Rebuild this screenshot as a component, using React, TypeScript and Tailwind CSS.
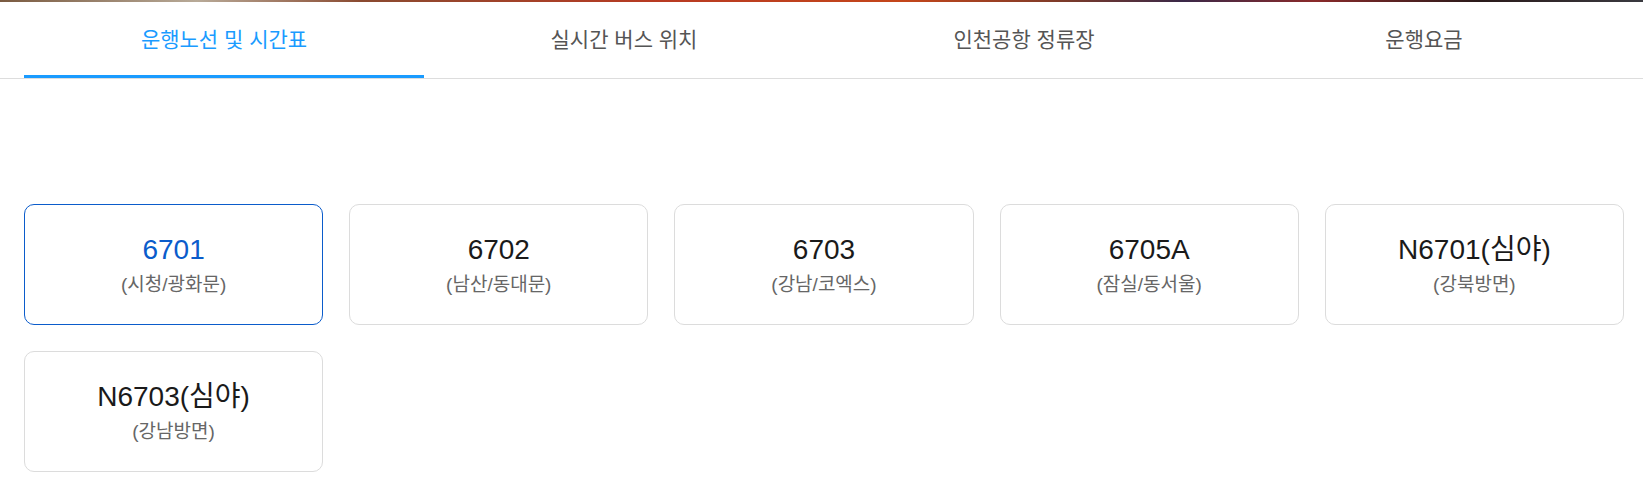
import React, { useState } from 'react';

const tabs = ['운행노선 및 시간표', '실시간 버스 위치', '인천공항 정류장', '운행요금'];

const routes = [
  { no: '6701', area: '(시청/광화문)' },
  { no: '6702', area: '(남산/동대문)' },
  { no: '6703', area: '(강남/코엑스)' },
  { no: '6705A', area: '(잠실/동서울)' },
  { no: 'N6701(심야)', area: '(강북방면)' },
  { no: 'N6703(심야)', area: '(강남방면)' },
];

export default function App() {
  const [tab, setTab] = useState(0);
  const [route, setRoute] = useState(0);

  return (
    <div className="min-h-screen bg-white font-['Liberation_Sans','Noto_Sans_CJK_KR',sans-serif]">
      {/* photo strip peeking from the hero above */}
      <div className="h-[2px] bg-[linear-gradient(90deg,#7a5a40_0%,#b8aa98_12%,#8a4a30_22%,#b83a22_40%,#c4461a_55%,#7a3a2a_65%,#3a2848_72%,#8a2a2a_80%,#2a1a1a_90%,#3a3a40_100%)]" />

      {/* tabs */}
      <div className="border-b border-[#dddddd]">
        <div className="ml-[24px] flex w-[1600px]">
          {tabs.map((t, i) => (
            <button
              key={t}
              onClick={() => setTab(i)}
              className={`flex h-[76px] flex-1 items-center justify-center border-b-[3px] pt-[3px] text-[21px] ${
                tab === i ? 'border-[#1a9bff] text-[#1a9bff]' : 'border-transparent text-[#555555]'
              }`}
            >
              {t}
            </button>
          ))}
        </div>
      </div>

      {/* route cards */}
      <div className="ml-[24px] mt-[125px] grid w-[1600px] grid-cols-5 gap-[26px]">
        {routes.map((r, i) => (
          <button
            key={r.no}
            onClick={() => setRoute(i)}
            className={`flex h-[121px] flex-col items-center justify-center gap-[6px] rounded-[10px] border bg-white pt-[2px] ${
              route === i ? 'border-[#0b5ccb]' : 'border-[#dcdcdc]'
            }`}
          >
            <span className={`text-[28px] leading-[33px] ${route === i ? 'text-[#0b5ccb]' : 'text-[#1a1a1a]'}`}>{r.no}</span>
            <span className="text-[19px] leading-[26px] text-[#666666]">{r.area}</span>
          </button>
        ))}
      </div>
    </div>
  );
}
